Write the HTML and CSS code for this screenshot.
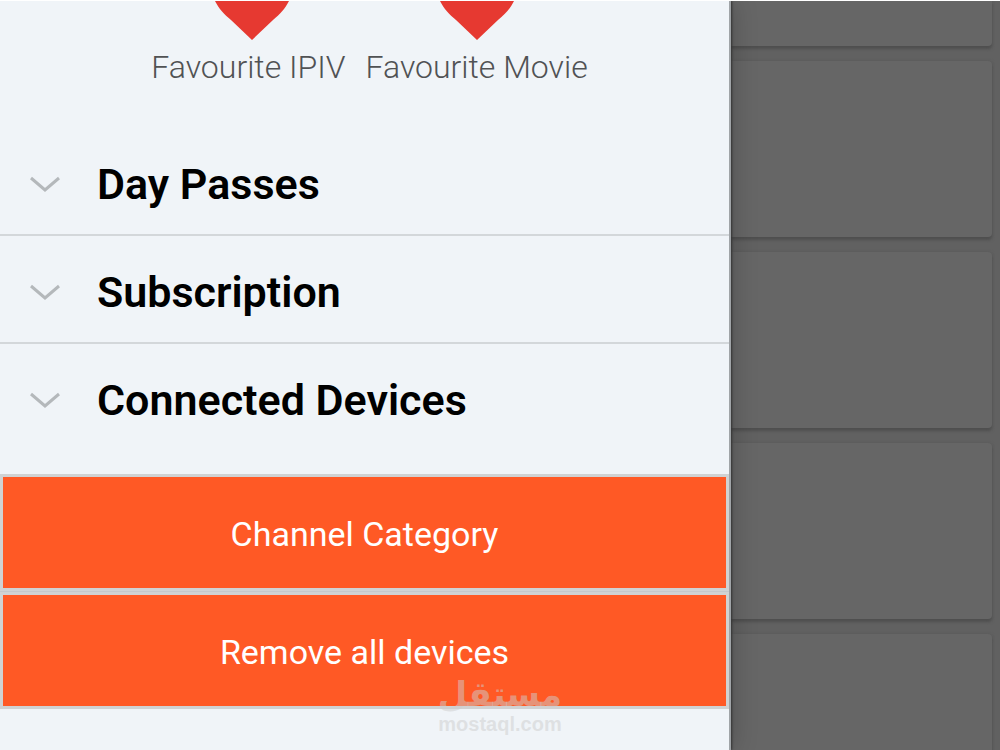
FILE: index.html
```
<!DOCTYPE html>
<html lang="en">
<head>
    <meta charset="UTF-8">
    <meta name="viewport" content="width=device-width, initial-scale=1.0">
    <title>Menu</title>
    <link rel="stylesheet" href="styles.css">
</head>
<body>
    <div class="screen">
        <nav class="drawer">
            <div class="favourites">
                <a class="favourite" href="#iptv">
                    <svg class="heart" viewBox="0 0 74 39" aria-hidden="true">
                        <path d="M0 0H74C70 8 65 13 58 19L37 39L16 19C9 13 4 8 0 0Z"/>
                    </svg>
                    <span class="favourite-name">Favourite IPIV</span>
                </a>
                <a class="favourite" href="#movie">
                    <svg class="heart" viewBox="0 0 74 39" aria-hidden="true">
                        <path d="M0 0H74C70 8 65 13 58 19L37 39L16 19C9 13 4 8 0 0Z"/>
                    </svg>
                    <span>Favourite Movie</span>
                </a>
            </div>

            <div class="groups">
                <button class="group" type="button">
                    <svg class="chevron" viewBox="0 0 30 16" aria-hidden="true"><path d="M1 2L15 14L29 2"/></svg>
                    <span>Day Passes</span>
                </button>
                <button class="group" type="button">
                    <svg class="chevron" viewBox="0 0 30 16" aria-hidden="true"><path d="M1 2L15 14L29 2"/></svg>
                    <span>Subscription</span>
                </button>
                <button class="group" type="button">
                    <svg class="chevron" viewBox="0 0 30 16" aria-hidden="true"><path d="M1 2L15 14L29 2"/></svg>
                    <span>Connected Devices</span>
                </button>
            </div>

            <div class="actions">
                <button class="action" type="button">Channel Category</button>
                <button class="action" type="button">Remove all devices</button>
            </div>
        </nav>

        <main class="cards">
            <div class="card card-first"></div>
            <div class="card"></div>
            <div class="card"></div>
            <div class="card"></div>
            <div class="card"></div>
        </main>

        <div class="watermark">
            <span class="watermark-name" lang="ar" dir="rtl">مستقل</span>
            <span class="watermark-site">mostaql.com</span>
        </div>
    </div>
</body>
</html>
```

FILE: styles.css
```
* {
    box-sizing: border-box;
    margin: 0;
    padding: 0;
}

body {
    font-family: Roboto, "Liberation Sans", sans-serif;
    background-color: #616161;
}

.screen {
    position: relative;
    display: flex;
    height: 100vh;
    overflow: hidden;
    border-top: 1px solid #fff;
}

/* drawer */
.drawer {
    position: relative;
    z-index: 1;
    width: 73.1%;
    flex-shrink: 0;
    background-color: #f0f4f8;
    border-right: 2px solid #a0a4a7;
    box-shadow: 1px 0 2px #333, 2px 0 24px rgba(0, 0, 0, 0.2);
}

.favourites {
    display: flex;
    justify-content: center;
    gap: 12px;
    padding-left: 10px;
}

.favourite {
    display: flex;
    flex-direction: column;
    align-items: center;
    gap: 8px;
    font-size: 32px;
    font-weight: 300;
    line-height: 38px;
    color: #505254;
    text-decoration: none;
    white-space: nowrap;
}

.favourite-name {
    padding-right: 8px;
}

.heart {
    width: 74px;
    height: 39px;
    fill: #e63931;
}

.groups {
    margin-top: 42px;
}

.group {
    display: flex;
    align-items: center;
    gap: 37px;
    width: 100%;
    height: 108px;
    padding: 5px 30px 0;
    border: none;
    border-bottom: 2px solid #d3d7da;
    background: none;
    font-family: inherit;
    font-size: 43px;
    font-weight: 600;
    color: #000;
    text-align: left;
}

.group:last-child {
    border-bottom-color: transparent;
}

.chevron {
    width: 30px;
    height: 16px;
    fill: none;
    stroke: #b4b8bb;
    stroke-width: 3;
}

.actions {
    display: flex;
    flex-direction: column;
    gap: 1px;
    margin-top: 22px;
    background-color: #c4c8cb;
}

.action {
    height: 117px;
    padding-top: 2px;
    border: 3px solid #d0d2d3;
    background-color: #ff5925;
    font-family: inherit;
    font-size: 34px;
    color: #fff;
}

/* list behind the drawer */
.cards {
    flex: 1;
    display: flex;
    flex-direction: column;
    gap: 15px;
    padding-right: 8px;
    background-color: #616161;
}

.card {
    flex-shrink: 0;
    height: 176px;
    border-radius: 0 4px 4px 0;
    background-color: #666;
    box-shadow: 0 3px 3px #4f4f4f, 0 0 3px #585858;
}

.card-first {
    height: 45px;
    border-top-right-radius: 0;
}

.watermark {
    position: absolute;
    z-index: 2;
    left: 50%;
    bottom: 14px;
    display: flex;
    flex-direction: column;
    align-items: center;
    transform: translateX(-50%);
    color: rgba(205, 205, 205, 0.5);
    font-weight: 700;
}

.watermark-name {
    font-family: "DejaVu Sans", sans-serif;
    font-size: 34px;
    line-height: 38px;
}

.watermark-site {
    font-family: "Liberation Sans", sans-serif;
    font-size: 20px;
    line-height: 23px;
}
```
